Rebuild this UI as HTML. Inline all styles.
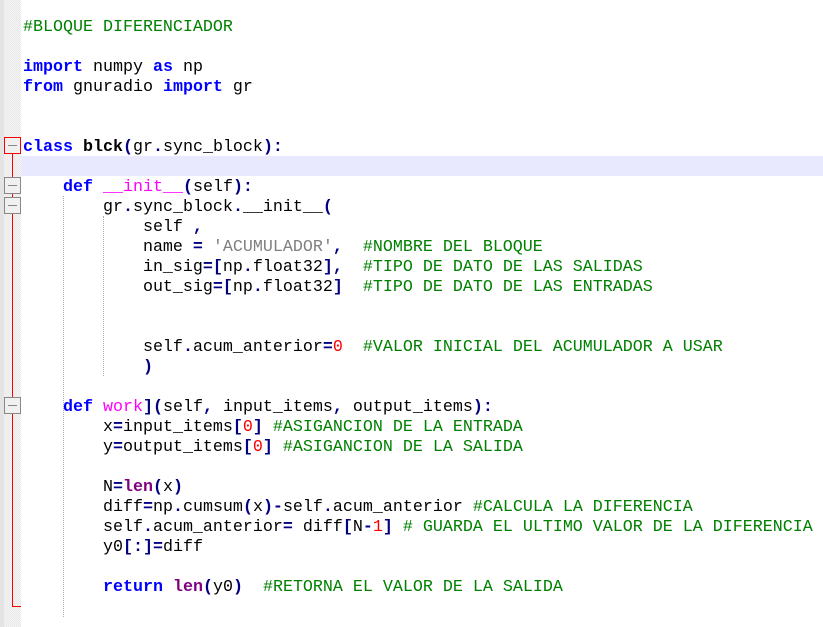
<!DOCTYPE html>
<html><head><style>
body{margin:0;width:823px;height:627px;overflow:hidden;background:#fff;position:relative;font-family:"Liberation Mono",monospace;}
.g1{position:absolute;left:0;top:0;width:4px;height:627px;background:#e4e4e4}
.g2{position:absolute;left:4px;top:0;width:17px;height:627px;background:repeating-conic-gradient(#f4f4f4 0 25%,#e9e9e9 0 50%) 0 0/2px 2px}
.hl{position:absolute;left:21px;top:156px;width:802px;height:20px;background:#e8e8ff}
.vl{position:absolute;left:12px;width:1px;background:#f00}
.box{position:absolute;left:4px;width:15px;height:15px;background:#f0f0f0;border:1px solid #888}
.box.r{border-color:#f00}
.box:after{content:"";position:absolute;left:3px;right:3px;top:7px;height:1px;background:#888}
.ig{position:absolute;width:0;border-left:1px dotted #aaa}
.code{position:absolute;left:23px;top:18px;font-size:16.67px;line-height:20px;white-space:pre;color:#000}
.k{color:#00f;font-weight:bold}.c{color:#008000}.s{color:#808080}.n{color:#f00}.o{color:#000080;font-weight:bold}.f{color:#f0f}.b{font-weight:bold}.l{color:#800080;font-weight:bold}
</style></head><body>
<div class="g1"></div><div class="g2"></div>
<div class="hl"></div>
<div class="vl" style="top:152px;height:455px"></div>
<div class="vl" style="top:606px;height:1px;left:12px;width:9px"></div>
<div class="box r" style="top:137px"></div>
<div class="box" style="top:177px"></div>
<div class="box" style="top:197px"></div>
<div class="box" style="top:397px"></div>
<div class="ig" style="left:63px;top:196px;height:421px"></div>
<div class="ig" style="left:103px;top:216px;height:160px"></div>
<div class="code"><span class="c">#BLOQUE DIFERENCIADOR</span>

<span class="k">import</span> numpy <span class="k">as</span> np
<span class="k">from</span> gnuradio <span class="k">import</span> gr


<span class="k">class</span> <span class="b">blck</span><span class="o">(</span>gr<span class="o">.</span>sync_block<span class="o">):</span>

    <span class="k">def</span> <span class="f">__init__</span><span class="o">(</span>self<span class="o">):</span>
        gr<span class="o">.</span>sync_block<span class="o">.</span>__init__<span class="o">(</span>
            self <span class="o">,</span>
            name <span class="o">=</span> <span class="s">'ACUMULADOR'</span><span class="o">,</span>  <span class="c">#NOMBRE DEL BLOQUE</span>
            in_sig<span class="o">=[</span>np<span class="o">.</span>float32<span class="o">],</span>  <span class="c">#TIPO DE DATO DE LAS SALIDAS</span>
            out_sig<span class="o">=[</span>np<span class="o">.</span>float32<span class="o">]</span>  <span class="c">#TIPO DE DATO DE LAS ENTRADAS</span>


            self<span class="o">.</span>acum_anterior<span class="o">=</span><span class="n">0</span>  <span class="c">#VALOR INICIAL DEL ACUMULADOR A USAR</span>
            <span class="o">)</span>

    <span class="k">def</span> <span class="f">work</span><span class="o">](</span>self<span class="o">,</span> input_items<span class="o">,</span> output_items<span class="o">):</span>
        x<span class="o">=</span>input_items<span class="o">[</span><span class="n">0</span><span class="o">]</span> <span class="c">#ASIGANCION DE LA ENTRADA</span>
        y<span class="o">=</span>output_items<span class="o">[</span><span class="n">0</span><span class="o">]</span> <span class="c">#ASIGANCION DE LA SALIDA</span>

        N<span class="o">=</span><span class="l">len</span><span class="o">(</span>x<span class="o">)</span>
        diff<span class="o">=</span>np<span class="o">.</span>cumsum<span class="o">(</span>x<span class="o">)-</span>self<span class="o">.</span>acum_anterior <span class="c">#CALCULA LA DIFERENCIA</span>
        self<span class="o">.</span>acum_anterior<span class="o">=</span> diff<span class="o">[</span>N<span class="o">-</span><span class="n">1</span><span class="o">]</span> <span class="c"># GUARDA EL ULTIMO VALOR DE LA DIFERENCIA</span>
        y0<span class="o">[:]=</span>diff

        <span class="k">return</span> <span class="l">len</span><span class="o">(</span>y0<span class="o">)</span>  <span class="c">#RETORNA EL VALOR DE LA SALIDA</span>
</div>
</body></html>
